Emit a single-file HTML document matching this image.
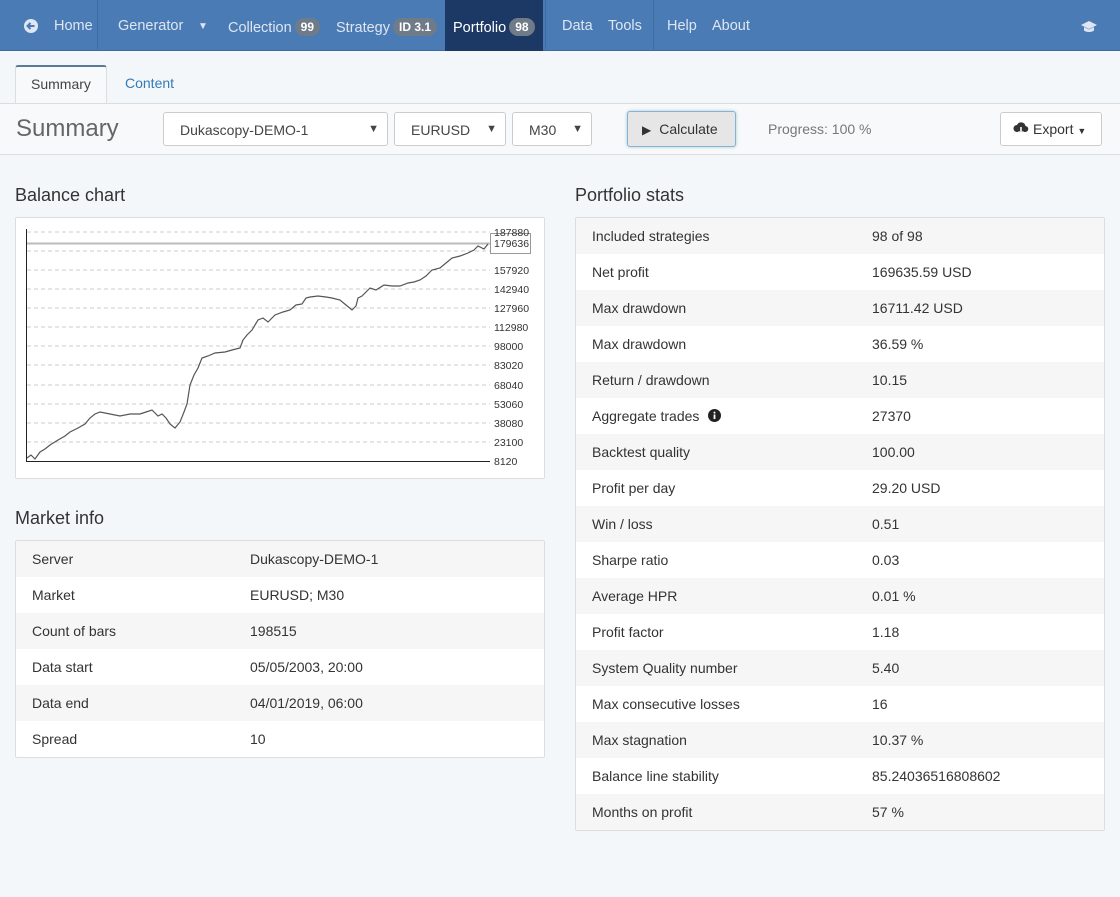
<!DOCTYPE html>
<html><head><meta charset="utf-8"><style>
*{box-sizing:border-box;margin:0;padding:0}
body{width:1120px;height:897px;background:#f4f7fa;font-family:"Liberation Sans",Arial,sans-serif;font-size:14px;color:#333;position:relative;overflow:hidden}
.nav{position:absolute;left:0;top:0;width:1120px;height:51px;background:#4b7bb5;border-bottom:1px solid #3d6aa0}
.nav span{position:absolute;top:18px;color:#dde6f2;font-size:14.5px}
.sep{position:absolute;top:0;width:1px;height:51px;background:#3f6ca3}
.badge{display:inline-block;background:#6f7b88;color:#fff;font-weight:bold;font-size:12px;border-radius:9px;padding:2px 6px;margin-left:3px;vertical-align:1px}
.act{position:absolute;left:445px;top:0;width:98px;height:51px;background:#1c3865}
.abs{position:absolute}
.sel{position:absolute;top:112px;height:34px;background:#fff;border:1px solid #ccc;border-radius:3px;font-size:14px;color:#444;padding:9px 16px}
.sel i{position:absolute;right:8px;top:10px;font-style:normal;font-size:11px;color:#444}
h3{position:absolute;font-weight:normal;font-size:18px;color:#333}
.panel{position:absolute;background:#fff;border:1px solid #ddd;border-radius:2px}
table{border-collapse:collapse;width:100%}
td{height:36px;font-size:14px;color:#333}
tr:nth-child(odd) td{background:#f6f6f6}
.lt td:first-child{padding-left:16px;width:234px}
.rt td:first-child{padding-left:16px;width:296px}
</style></head><body>
<div class="nav">
<div class="act"></div>
<svg class="abs" style="left:24px;top:19px" width="14" height="14" viewBox="0 0 14 14"><circle cx="7" cy="7" r="7" fill="#dde6f2"/><path d="M3.5 7h7M6.5 4L3.5 7l3 3" stroke="#4b7bb5" stroke-width="2" fill="none"/></svg>
<span style="left:54px">Home</span>
<div class="sep" style="left:97px"></div>
<span style="left:118px">Generator</span><span style="left:198px;font-size:10px;top:21px">▼</span>
<span style="left:228px">Collection<b class="badge">99</b></span>
<span style="left:336px">Strategy<b class="badge">ID 3.1</b></span>
<span style="left:453px;color:#fff">Portfolio<b class="badge">98</b></span>
<div class="sep" style="left:545px"></div>
<span style="left:562px">Data</span><span style="left:608px">Tools</span>
<div class="sep" style="left:653px"></div>
<span style="left:667px">Help</span><span style="left:712px">About</span>
<svg class="abs" style="left:1080px;top:20px" width="18" height="13" viewBox="0 0 18 13"><path d="M1 5L9 1l8 4-8 4z" fill="#dde6f2"/><path d="M4 7v3.5c2 2 8 2 10 0V7L9 9.5z" fill="#dde6f2"/></svg>
</div>
<div class="abs" style="left:15px;top:65px;width:92px;height:40px;background:#f8f9fa;border:1px solid #ddd;border-top:2px solid #5b7a93;border-bottom:none;border-radius:3px 3px 0 0;font-size:14px;padding:9px 15px;color:#444">Summary</div>
<div class="abs" style="left:125px;top:75px;font-size:14px;color:#337ab7">Content</div>
<div class="abs" style="left:0;top:103px;width:1120px;height:52px;background:#f8f9fa;border-top:1px solid #ddd;border-bottom:1px solid #ddd"></div>
<div class="abs" style="left:16px;top:115px;font-size:24px;color:#666">Summary</div>
<div class="sel" style="left:163px;width:225px">Dukascopy-DEMO-1<i>▼</i></div>
<div class="sel" style="left:394px;width:112px">EURUSD<i>▼</i></div>
<div class="sel" style="left:512px;width:80px;padding-left:16px">M30<i>▼</i></div>
<div class="abs" style="left:627px;top:111px;width:109px;height:36px;background:#e6e6e6;border:1px solid #8ab0d8;border-radius:3px;box-shadow:0 0 3px #9cc;font-size:14px;padding:9px 0 0 14px;color:#333"><span style="font-size:12px;margin-right:8px">▶</span>Calculate</div>
<div class="abs" style="left:768px;top:121px;color:#777">Progress: 100 %</div>
<div class="abs" style="left:1000px;top:112px;width:102px;height:34px;background:#fff;border:1px solid #ccc;border-radius:3px;padding:8px 0 0 12px;color:#333">
<svg width="16" height="13" viewBox="0 0 16 13" style="vertical-align:-1px;margin-right:4px"><path d="M4 10a3.5 3.5 0 010-7 4.5 4.5 0 018.5 1A3 3 0 0112 10z" fill="#333"/><path d="M8 5v7M5.5 9.5L8 12l2.5-2.5" stroke="#fff" stroke-width="1.6" fill="none"/></svg>Export <span style="font-size:9px">▼</span></div>

<h3 style="left:15px;top:185px">Balance chart</h3>
<div class="panel" style="left:15px;top:217px;width:530px;height:262px"></div>
<svg class="abs" style="left:0;top:0" width="560" height="480" font-family="Liberation Sans,Arial" font-size="11" fill="#333">
<g stroke="#ccc" stroke-dasharray="4,3">
<line x1="27" x2="490" y1="232" y2="232"/><line x1="27" x2="490" y1="251" y2="251"/><line x1="27" x2="490" y1="270" y2="270"/><line x1="27" x2="490" y1="289" y2="289"/><line x1="27" x2="490" y1="308" y2="308"/><line x1="27" x2="490" y1="327" y2="327"/><line x1="27" x2="490" y1="346" y2="346"/><line x1="27" x2="490" y1="365" y2="365"/><line x1="27" x2="490" y1="385" y2="385"/><line x1="27" x2="490" y1="404" y2="404"/><line x1="27" x2="490" y1="423" y2="423"/><line x1="27" x2="490" y1="442" y2="442"/></g>
<line x1="27" x2="490" y1="243.5" y2="243.5" stroke="#bbb" stroke-width="2"/>
<polyline fill="none" stroke="#555" stroke-width="1.2" points="27,458 31,455 35,459 40,452 45,449 50,445 58,440 65,436 70,432 78,428 85,424 90,418 95,414 100,412 110,414 120,416 130,414 140,414 146,412 152,410 158,416 162,414 166,418 170,424 175,428 180,422 184,412 187,404 190,385 194,375 198,368 202,358 208,356 215,353 225,352 232,350 240,348 243,340 247,335 252,330 258,320 263,318 268,322 275,315 283,312 290,310 296,305 302,304 306,298 310,297 318,296 326,297 332,298 340,300 346,305 352,310 356,306 358,298 362,296 366,292 370,288 376,290 384,285 392,286 400,286 408,283 414,282 420,280 426,276 432,270 440,268 446,263 452,258 460,256 468,253 474,250 478,246 484,249 488,244"/>
<line x1="26.5" x2="26.5" y1="229" y2="462" stroke="#222"/>
<line x1="26" x2="490" y1="461.5" y2="461.5" stroke="#222"/>
<rect x="490.5" y="233.5" width="40" height="20" fill="#fff" stroke="#999"/>
<g font-size="10.5"><text x="494" y="236">187880</text><text x="494" y="247">179636</text><text x="494" y="274">157920</text><text x="494" y="293">142940</text><text x="494" y="312">127960</text><text x="494" y="331">112980</text><text x="494" y="350">98000</text><text x="494" y="369">83020</text><text x="494" y="389">68040</text><text x="494" y="408">53060</text><text x="494" y="427">38080</text><text x="494" y="446">23100</text><text x="494" y="465">8120</text></g>
</svg>

<h3 style="left:15px;top:508px">Market info</h3>
<div class="panel" style="left:15px;top:540px;width:530px;height:218px">
<table class="lt"><tr><td>Server</td><td>Dukascopy-DEMO-1</td></tr><tr><td>Market</td><td>EURUSD; M30</td></tr><tr><td>Count of bars</td><td>198515</td></tr><tr><td>Data start</td><td>05/05/2003, 20:00</td></tr><tr><td>Data end</td><td>04/01/2019, 06:00</td></tr><tr><td>Spread</td><td>10</td></tr></table></div>

<h3 style="left:575px;top:185px">Portfolio stats</h3>
<div class="panel" style="left:575px;top:217px;width:530px;height:614px">
<table class="rt">
<tr><td>Included strategies</td><td>98 of 98</td></tr>
<tr><td>Net profit</td><td>169635.59 USD</td></tr>
<tr><td>Max drawdown</td><td>16711.42 USD</td></tr>
<tr><td>Max drawdown</td><td>36.59 %</td></tr>
<tr><td>Return / drawdown</td><td>10.15</td></tr>
<tr><td>Aggregate trades <svg width="13" height="13" viewBox="0 0 13 13" style="vertical-align:-1px;margin-left:5px"><circle cx="6.5" cy="6.5" r="6.5" fill="#222"/><rect x="5.6" y="5.5" width="1.8" height="4.5" fill="#fff"/><circle cx="6.5" cy="3.6" r="1" fill="#fff"/></svg></td><td>27370</td></tr>
<tr><td>Backtest quality</td><td>100.00</td></tr>
<tr><td>Profit per day</td><td>29.20 USD</td></tr>
<tr><td>Win / loss</td><td>0.51</td></tr>
<tr><td>Sharpe ratio</td><td>0.03</td></tr>
<tr><td>Average HPR</td><td>0.01 %</td></tr>
<tr><td>Profit factor</td><td>1.18</td></tr>
<tr><td>System Quality number</td><td>5.40</td></tr>
<tr><td>Max consecutive losses</td><td>16</td></tr>
<tr><td>Max stagnation</td><td>10.37 %</td></tr>
<tr><td>Balance line stability</td><td>85.24036516808602</td></tr>
<tr><td>Months on profit</td><td>57 %</td></tr>
</table></div>
</body></html>
